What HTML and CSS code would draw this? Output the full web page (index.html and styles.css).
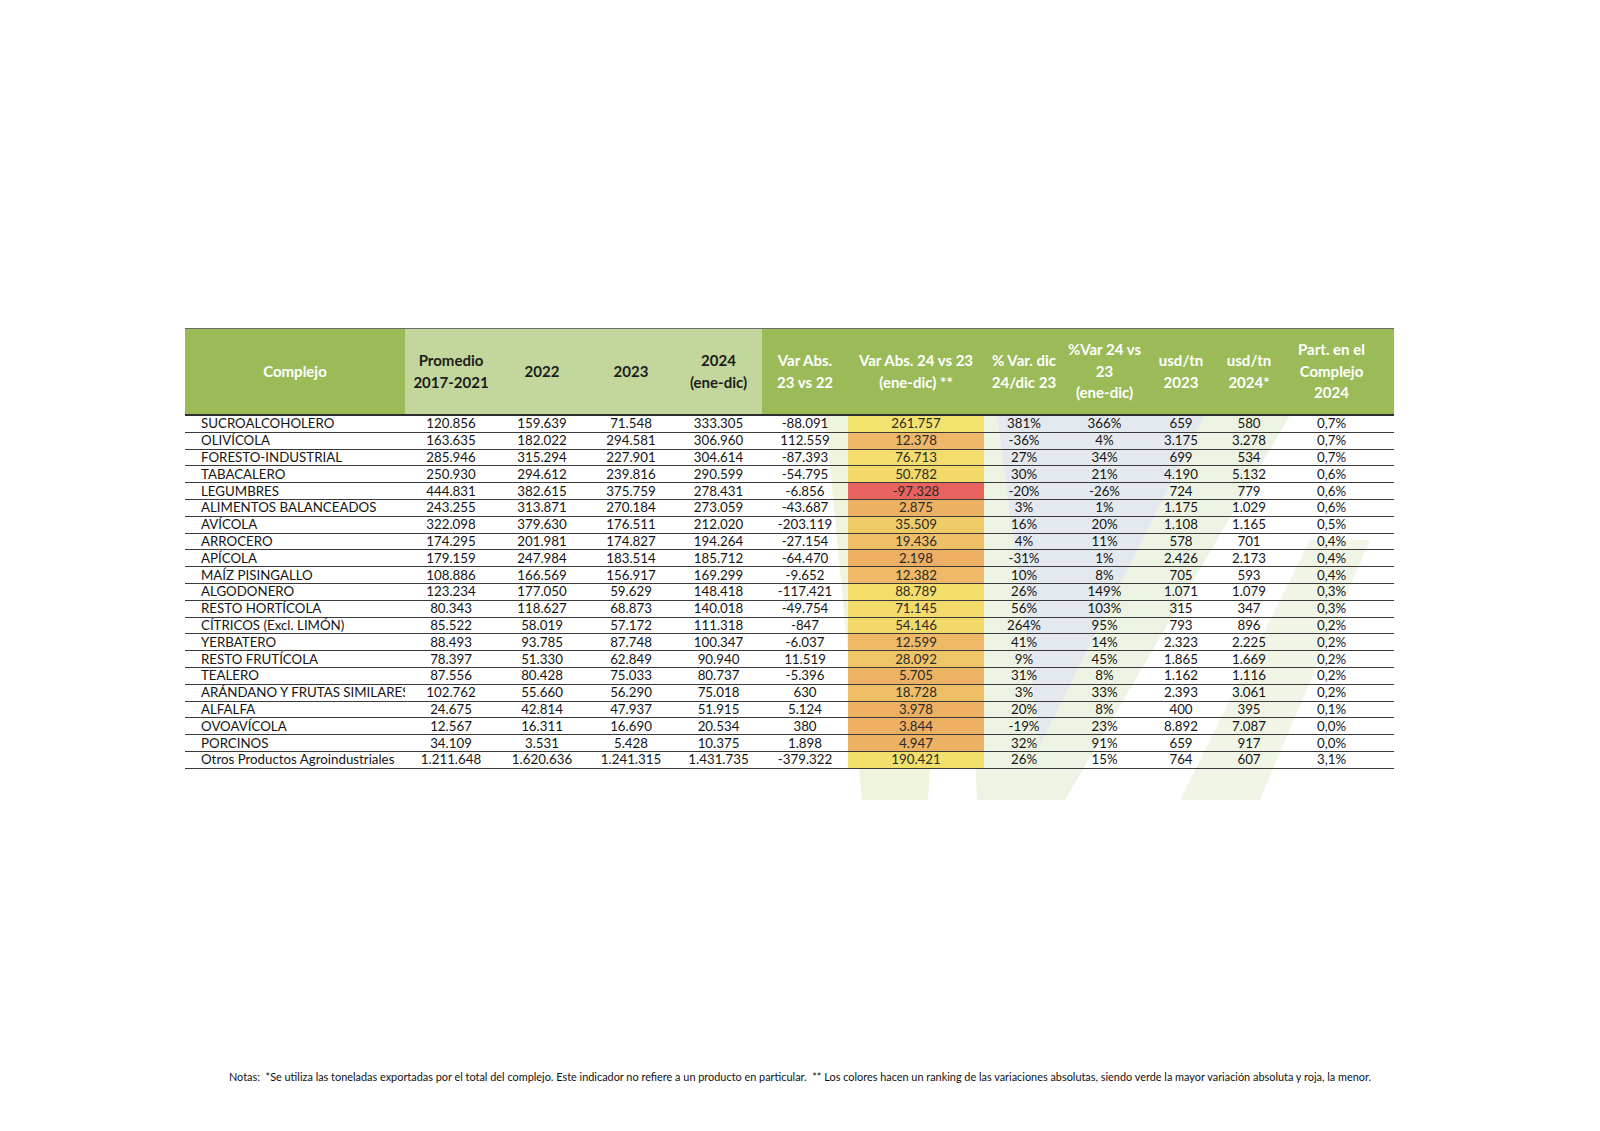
FILE: index.html
```html
<!DOCTYPE html>
<html lang="es">
<head>
<meta charset="utf-8">
<title>Complejos agroindustriales</title>
<link rel="stylesheet" href="styles.css">
</head>
<body>
<main class="page">
  <div class="sheet">
    <svg class="watermark" viewBox="0 0 1209 480" width="1209" height="480" aria-hidden="true">
      <polygon class="wm-a" points="640,87 765,87 743,472 677,472"/>
      <polygon class="wm-b" points="775,87 812,87 855,417 1020,87 1105,87 880,472 792,472"/>
      <polygon class="wm-c" points="812,87 1020,87 855,417"/>
      <polygon class="wm-d" points="1125,212 1185,212 1075,472 995,472"/>
    </svg>
    <table class="data">
      <colgroup>
        <col class="w-name"><col class="w-prom"><col class="w-y22"><col class="w-y23"><col class="w-y24">
        <col class="w-va"><col class="w-hl"><col class="w-pv"><col class="w-pv24"><col class="w-u23"><col class="w-u24"><col class="w-part">
      </colgroup>
      <thead>
        <tr>
          <th class="dark">Complejo</th>
          <th class="light">Promedio<br>2017-2021</th>
          <th class="light">2022</th>
          <th class="light">2023</th>
          <th class="light">2024<br>(ene-dic)</th>
          <th class="dark">Var Abs.<br>23 vs 22</th>
          <th class="dark">Var Abs. 24 vs 23<br>(ene-dic) **</th>
          <th class="dark">% Var. dic<br>24/dic 23</th>
          <th class="dark">%Var 24 vs<br>23<br>(ene-dic)</th>
          <th class="dark">usd/tn<br>2023</th>
          <th class="dark">usd/tn<br>2024*</th>
          <th class="dark part">Part. en el<br>Complejo<br>2024</th>
        </tr>
      </thead>
      <tbody>
        <tr><td class="name">SUCROALCOHOLERO</td><td>120.856</td><td>159.639</td><td>71.548</td><td>333.305</td><td>-88.091</td><td class="hl" style="--c:#f2e26e">261.757</td><td>381%</td><td>366%</td><td>659</td><td>580</td><td class="part">0,7%</td></tr>
        <tr><td class="name">OLIVÍCOLA</td><td>163.635</td><td>182.022</td><td>294.581</td><td>306.960</td><td>112.559</td><td class="hl" style="--c:#efb868">12.378</td><td>-36%</td><td>4%</td><td>3.175</td><td>3.278</td><td class="part">0,7%</td></tr>
        <tr><td class="name">FORESTO-INDUSTRIAL</td><td>285.946</td><td>315.294</td><td>227.901</td><td>304.614</td><td>-87.393</td><td class="hl" style="--c:#f4dd6c">76.713</td><td>27%</td><td>34%</td><td>699</td><td>534</td><td class="part">0,7%</td></tr>
        <tr><td class="name">TABACALERO</td><td>250.930</td><td>294.612</td><td>239.816</td><td>290.599</td><td>-54.795</td><td class="hl" style="--c:#f3d86a">50.782</td><td>30%</td><td>21%</td><td>4.190</td><td>5.132</td><td class="part">0,6%</td></tr>
        <tr><td class="name">LEGUMBRES</td><td>444.831</td><td>382.615</td><td>375.759</td><td>278.431</td><td>-6.856</td><td class="hl" style="--c:#e8635d">-97.328</td><td>-20%</td><td>-26%</td><td>724</td><td>779</td><td class="part">0,6%</td></tr>
        <tr><td class="name">ALIMENTOS BALANCEADOS</td><td>243.255</td><td>313.871</td><td>270.184</td><td>273.059</td><td>-43.687</td><td class="hl" style="--c:#edb164">2.875</td><td>3%</td><td>1%</td><td>1.175</td><td>1.029</td><td class="part">0,6%</td></tr>
        <tr><td class="name">AVÍCOLA</td><td>322.098</td><td>379.630</td><td>176.511</td><td>212.020</td><td>-203.119</td><td class="hl" style="--c:#f0cc68">35.509</td><td>16%</td><td>20%</td><td>1.108</td><td>1.165</td><td class="part">0,5%</td></tr>
        <tr><td class="name">ARROCERO</td><td>174.295</td><td>201.981</td><td>174.827</td><td>194.264</td><td>-27.154</td><td class="hl" style="--c:#efbf67">19.436</td><td>4%</td><td>11%</td><td>578</td><td>701</td><td class="part">0,4%</td></tr>
        <tr><td class="name">APÍCOLA</td><td>179.159</td><td>247.984</td><td>183.514</td><td>185.712</td><td>-64.470</td><td class="hl" style="--c:#edaf63">2.198</td><td>-31%</td><td>1%</td><td>2.426</td><td>2.173</td><td class="part">0,4%</td></tr>
        <tr><td class="name">MAÍZ PISINGALLO</td><td>108.886</td><td>166.569</td><td>156.917</td><td>169.299</td><td>-9.652</td><td class="hl" style="--c:#efb967">12.382</td><td>10%</td><td>8%</td><td>705</td><td>593</td><td class="part">0,4%</td></tr>
        <tr><td class="name">ALGODONERO</td><td>123.234</td><td>177.050</td><td>59.629</td><td>148.418</td><td>-117.421</td><td class="hl" style="--c:#f3de6c">88.789</td><td>26%</td><td>149%</td><td>1.071</td><td>1.079</td><td class="part">0,3%</td></tr>
        <tr><td class="name">RESTO HORTÍCOLA</td><td>80.343</td><td>118.627</td><td>68.873</td><td>140.018</td><td>-49.754</td><td class="hl" style="--c:#f3da6b">71.145</td><td>56%</td><td>103%</td><td>315</td><td>347</td><td class="part">0,3%</td></tr>
        <tr><td class="name">CÍTRICOS (Excl. LIMÓN)</td><td>85.522</td><td>58.019</td><td>57.172</td><td>111.318</td><td>-847</td><td class="hl" style="--c:#f3d86a">54.146</td><td>264%</td><td>95%</td><td>793</td><td>896</td><td class="part">0,2%</td></tr>
        <tr><td class="name">YERBATERO</td><td>88.493</td><td>93.785</td><td>87.748</td><td>100.347</td><td>-6.037</td><td class="hl" style="--c:#efb967">12.599</td><td>41%</td><td>14%</td><td>2.323</td><td>2.225</td><td class="part">0,2%</td></tr>
        <tr><td class="name">RESTO FRUTÍCOLA</td><td>78.397</td><td>51.330</td><td>62.849</td><td>90.940</td><td>11.519</td><td class="hl" style="--c:#f0c567">28.092</td><td>9%</td><td>45%</td><td>1.865</td><td>1.669</td><td class="part">0,2%</td></tr>
        <tr><td class="name">TEALERO</td><td>87.556</td><td>80.428</td><td>75.033</td><td>80.737</td><td>-5.396</td><td class="hl" style="--c:#edb264">5.705</td><td>31%</td><td>8%</td><td>1.162</td><td>1.116</td><td class="part">0,2%</td></tr>
        <tr><td class="name">ARÁNDANO Y FRUTAS SIMILARES</td><td>102.762</td><td>55.660</td><td>56.290</td><td>75.018</td><td>630</td><td class="hl" style="--c:#efbf67">18.728</td><td>3%</td><td>33%</td><td>2.393</td><td>3.061</td><td class="part">0,2%</td></tr>
        <tr><td class="name">ALFALFA</td><td>24.675</td><td>42.814</td><td>47.937</td><td>51.915</td><td>5.124</td><td class="hl" style="--c:#edb063">3.978</td><td>20%</td><td>8%</td><td>400</td><td>395</td><td class="part">0,1%</td></tr>
        <tr><td class="name">OVOAVÍCOLA</td><td>12.567</td><td>16.311</td><td>16.690</td><td>20.534</td><td>380</td><td class="hl" style="--c:#edb063">3.844</td><td>-19%</td><td>23%</td><td>8.892</td><td>7.087</td><td class="part">0,0%</td></tr>
        <tr><td class="name">PORCINOS</td><td>34.109</td><td>3.531</td><td>5.428</td><td>10.375</td><td>1.898</td><td class="hl" style="--c:#edb164">4.947</td><td>32%</td><td>91%</td><td>659</td><td>917</td><td class="part">0,0%</td></tr>
        <tr><td class="name">Otros Productos Agroindustriales</td><td>1.211.648</td><td>1.620.636</td><td>1.241.315</td><td>1.431.735</td><td>-379.322</td><td class="hl" style="--c:#f2e06d">190.421</td><td>26%</td><td>15%</td><td>764</td><td>607</td><td class="part">3,1%</td></tr>
      </tbody>
    </table>
  </div>
  <p class="notes">Notas: &nbsp;*Se utiliza las toneladas exportadas por el total del complejo. Este indicador no refiere a un producto en particular. &nbsp;** Los colores hacen un ranking de las variaciones absolutas, siendo verde la mayor variación absoluta y roja, la menor.</p>
</main>
</body>
</html>
```

FILE: styles.css
```css
* { box-sizing: border-box; }

html, body {
  margin: 0;
  padding: 0;
  background: #ffffff;
}

body {
  font-family: Lato, "Liberation Sans", "DejaVu Sans", sans-serif;
  color: #141414;
}

.page {
  width: 1600px;
  height: 1131px;
  padding-top: 328px;
  padding-bottom: 48px;
  display: flex;
  flex-direction: column;
}

.sheet {
  position: relative;
  width: 1209px;
  margin-left: 185px;
}

.watermark {
  position: absolute;
  left: 0;
  top: 0;
  z-index: 0;
}

.wm-a { fill: #eff4dc; }
.wm-b { fill: #edf3e2; }
.wm-c { fill: #e3e9ef; }
.wm-d { fill: #f0f5e6; }

.data {
  position: relative;
  z-index: 1;
  width: 1209px;
  table-layout: fixed;
  border-collapse: separate;
  border-spacing: 0;
}

.w-name { width: 220px; }
.w-prom { width: 92px; }
.w-y22  { width: 90px; }
.w-y23  { width: 88px; }
.w-y24  { width: 87px; }
.w-va   { width: 86px; }
.w-hl   { width: 136px; }
.w-pv   { width: 80px; }
.w-pv24 { width: 81px; }
.w-u23  { width: 72px; }
.w-u24  { width: 64px; }
.w-part { width: 113px; }

.data th {
  height: 88px;
  padding: 0;
  border-top: 1px solid #6b6b6b;
  border-bottom: 2px solid #2e2e2e;
  font-weight: 700;
  font-size: 15px;
  line-height: 21.5px;
  text-align: center;
  vertical-align: middle;
  white-space: nowrap;
}

.data th.dark {
  background: #9bbb59;
  color: #ffffff;
}

.data th.light {
  background: #c3d69b;
  color: #1c1c1c;
}

.data th.part,
.data td.part {
  padding-right: 12px;
}

.data td {
  height: 16.8px;
  padding: 0;
  border-bottom: 1px solid #3a3a3a;
  font-size: 13.3px;
  line-height: 15px;
  text-align: center;
  vertical-align: middle;
  white-space: nowrap;
  overflow: hidden;
  color: #141414;
}

.data td.name {
  text-align: left;
  padding-left: 16px;
  text-overflow: clip;
}

.data td.hl {
  background: var(--c);
  color: #2a2a2a;
}

.notes {
  margin: auto 0 0 0;
  font-size: 10.9px;
  line-height: 13px;
  text-align: center;
  color: #111111;
}
```
